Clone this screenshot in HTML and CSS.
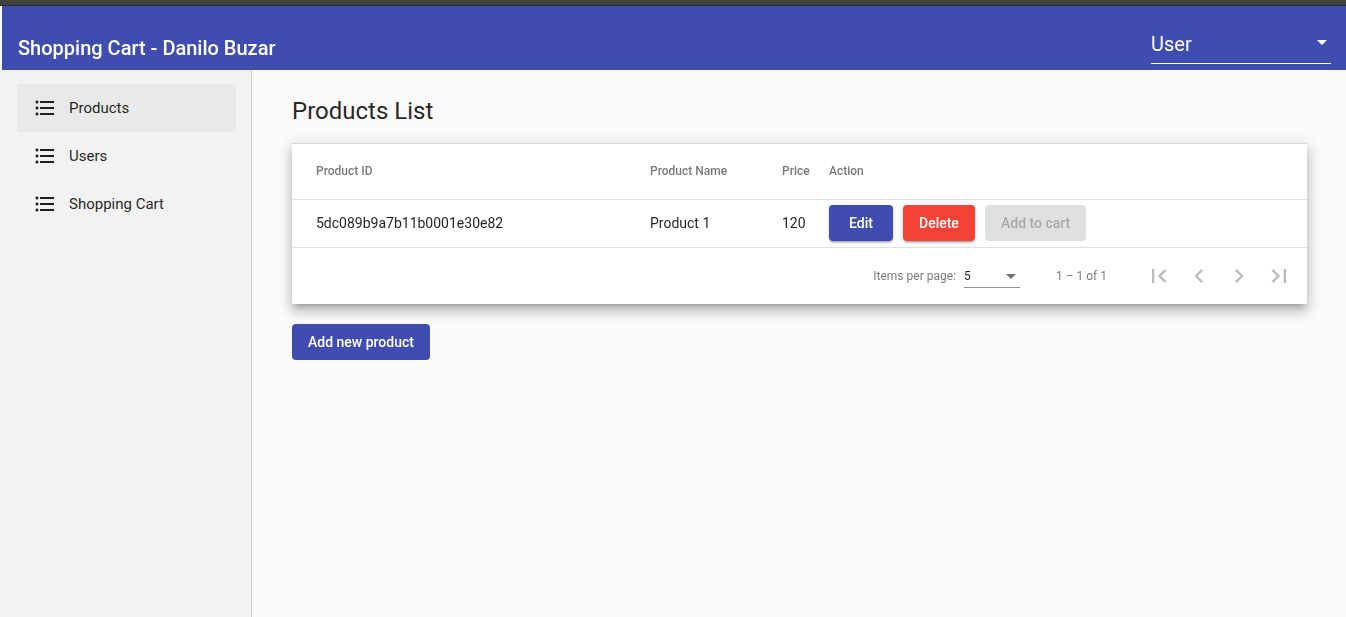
FILE: index.html
```html
<!DOCTYPE html>
<html lang="en">
<head>
<meta charset="utf-8">
<title>Shopping Cart</title>
<link rel="stylesheet" href="styles.css">
</head>
<body>
<div class="strip"></div>
<header class="toolbar">
  <div class="brand">Shopping Cart - Danilo Buzar</div>
  <div class="user-select"><span>User</span><i class="arrow arrow-white"></i></div>
</header>
<div class="shell">
  <nav class="sidebar">
    <a class="nav-item active"><svg class="nav-icon" viewBox="0 0 24 24"><path d="M4 10.5c-.83 0-1.5.67-1.5 1.5s.67 1.5 1.5 1.5 1.5-.67 1.5-1.5-.67-1.5-1.5-1.5zm0-6c-.83 0-1.5.67-1.5 1.5S3.17 7.5 4 7.5 5.5 6.83 5.5 6 4.83 4.500 4 4.500zm0 12c-.83 0-1.5.68-1.5 1.500s.68 1.500 1.500 1.500 1.500-.68 1.500-1.500-.67-1.500-1.500-1.500zM7 19h14v-2H7zm0-6h14v-2H7zm0-8v2h14V5z"/></svg>Products</a>
    <a class="nav-item"><svg class="nav-icon" viewBox="0 0 24 24"><path d="M4 10.5c-.83 0-1.5.67-1.5 1.5s.67 1.5 1.5 1.5 1.5-.67 1.5-1.5-.67-1.5-1.5-1.5zm0-6c-.83 0-1.5.67-1.5 1.5S3.17 7.5 4 7.5 5.5 6.83 5.5 6 4.83 4.500 4 4.500zm0 12c-.83 0-1.5.68-1.5 1.500s.68 1.500 1.500 1.500 1.500-.68 1.500-1.500-.67-1.500-1.500-1.500zM7 19h14v-2H7zm0-6h14v-2H7zm0-8v2h14V5z"/></svg>Users</a>
    <a class="nav-item"><svg class="nav-icon" viewBox="0 0 24 24"><path d="M4 10.5c-.83 0-1.5.67-1.5 1.5s.67 1.5 1.5 1.5 1.5-.67 1.5-1.5-.67-1.5-1.5-1.5zm0-6c-.83 0-1.5.67-1.5 1.5S3.17 7.5 4 7.5 5.5 6.83 5.5 6 4.83 4.500 4 4.500zm0 12c-.83 0-1.5.68-1.5 1.500s.68 1.500 1.500 1.500 1.500-.68 1.500-1.500-.67-1.500-1.500-1.500zM7 19h14v-2H7zm0-6h14v-2H7zm0-8v2h14V5z"/></svg>Shopping Cart</a>
  </nav>
  <main class="content">
    <h1 class="title">Products List</h1>
    <section class="card">
      <div class="row row-head">
        <div class="col-id">Product ID</div>
        <div class="col-name">Product Name</div>
        <div class="col-price">Price</div>
        <div>Action</div>
      </div>
      <div class="row row-body">
        <div class="col-id">5dc089b9a7b11b0001e30e82</div>
        <div class="col-name">Product 1</div>
        <div class="col-price">120</div>
        <div class="actions">
          <button class="btn btn-primary btn-raised">Edit</button>
          <button class="btn btn-warn btn-raised">Delete</button>
          <button class="btn btn-disabled">Add to cart</button>
        </div>
      </div>
      <div class="paginator">
        <span class="page-label">Items per page:</span>
        <div class="page-size"><span>5</span><i class="arrow arrow-grey"></i></div>
        <span class="page-range">1 – 1 of 1</span>
        <div class="page-buttons">
          <svg viewBox="0 0 24 24"><path d="M18.41 16.59L13.82 12l4.59-4.59L17 6l-6 6 6 6zM6 6h2v12H6z"/></svg>
          <svg viewBox="0 0 24 24"><path d="M15.41 7.41L14 6l-6 6 6 6 1.41-1.41L10.83 12z"/></svg>
          <svg viewBox="0 0 24 24"><path d="M10 6L8.59 7.41 13.17 12l-4.58 4.59L10 18l6-6z"/></svg>
          <svg viewBox="0 0 24 24"><path d="M5.59 7.41L10.18 12l-4.59 4.59L7 18l6-6-6-6zM16 6h2v12h-2z"/></svg>
        </div>
      </div>
    </section>
    <button class="btn btn-primary btn-add">Add new product</button>
  </main>
</div>
</body>
</html>
```
FILE: styles.css
```css
* { box-sizing: border-box; }
html, body { height: 100%; }
body {
  margin: 0;
  height: 617px;
  overflow: hidden;
  display: flex;
  flex-direction: column;
  background: #fff;
  font-family: Roboto, "Liberation Sans", sans-serif;
  color: rgba(0, 0, 0, 0.87);
}
.strip {
  height: 6px;
  flex: none;
  background: #424242;
  border-bottom: 1px solid #2f2f2f;
}
.toolbar {
  height: 64px;
  flex: none;
  margin-left: 2px;
  background: #3f4db1;
  color: #fff;
  display: flex;
  justify-content: space-between;
  padding: 0 15px 0 16px;
}
.brand {
  font-size: 20px;
  font-weight: 500;
  line-height: 32px;
  padding-top: 26px;
  will-change: transform;
}
.user-select {
  width: 180px;
  height: 58px;
  border-bottom: 1px solid #fff;
  font-size: 20px;
  display: flex;
  justify-content: space-between;
  align-items: center;
  padding-top: 18px;
  padding-right: 4px;
  will-change: transform;
}
.arrow {
  display: block;
  width: 0;
  height: 0;
  border-left: 5px solid transparent;
  border-right: 5px solid transparent;
  border-top: 5px solid currentColor;
}
.arrow-white { color: #fff; margin-top: -3px; }
.arrow-grey { color: rgba(0, 0, 0, 0.54); margin-top: 1px; }
.shell { flex: 1; display: flex; min-height: 0; }
.sidebar {
  width: 252px;
  flex: none;
  background: #f2f2f2;
  border-right: 1px solid #d4d4d4;
  padding: 14px 15px 0 17px;
}
.nav-item {
  height: 48px;
  display: flex;
  align-items: center;
  padding-left: 16px;
  font-size: 15px;
  color: rgba(0, 0, 0, 0.87);
}
.nav-item.active { background: #e9e9e9; }
.nav-icon {
  width: 24px;
  height: 24px;
  margin-right: 12px;
  fill: #212121;
  flex: none;
}
.content {
  flex: 1;
  background: #fafafa;
  padding: 25px 39px 0 40px;
}
.title {
  margin: 0 0 16px;
  font-size: 24px;
  font-weight: 400;
  line-height: 32px;
}
.card {
  background: #fff;
  border-top: 1px solid #d9d9d9;
  box-shadow: 0 5px 5px -3px rgba(0, 0, 0, 0.2), 0 8px 10px 1px rgba(0, 0, 0, 0.14), 0 3px 14px 2px rgba(0, 0, 0, 0.12);
}
.row {
  display: flex;
  align-items: center;
  padding-left: 24px;
  padding-bottom: 2px;
  border-bottom: 1px solid #e0e0e0;
  will-change: transform;
}
.row-head {
  height: 56px;
  font-size: 12px;
  font-weight: 500;
  color: rgba(0, 0, 0, 0.54);
}
.row-body { height: 48px; font-size: 14px; }
.col-id { width: 334px; }
.col-name { width: 132px; }
.col-price { width: 47px; }
.actions { display: flex; gap: 10px; }
.btn {
  height: 36px;
  min-width: 64px;
  border: 0;
  border-radius: 4px;
  padding: 0 16px;
  font-family: inherit;
  font-size: 14px;
  font-weight: 500;
  color: #fff;
  will-change: transform;
}
.btn-primary { background: #3f4db1; }
.btn-warn { background: #f44336; }
.btn-raised { box-shadow: 0 3px 1px -2px rgba(0, 0, 0, 0.2), 0 2px 2px 0 rgba(0, 0, 0, 0.14), 0 1px 5px 0 rgba(0, 0, 0, 0.12); }
.btn-disabled { background: #e0e0e0; color: rgba(0, 0, 0, 0.26); }
.btn-add { display: block; margin-top: 20px; }
.paginator {
  height: 56px;
  display: flex;
  align-items: center;
  justify-content: flex-end;
  padding-right: 14px;
  font-size: 12px;
  color: rgba(0, 0, 0, 0.54);
  will-change: transform;
}
.page-label { margin-right: 8px; }
.page-size {
  width: 56px;
  height: 24px;
  border-bottom: 1px solid rgba(0, 0, 0, 0.42);
  display: flex;
  justify-content: space-between;
  align-items: center;
  padding-right: 4px;
  color: rgba(0, 0, 0, 0.87);
}
.page-range { margin: 0 38px 0 36px; }
.page-buttons { display: flex; gap: 12px; }
.page-buttons svg { width: 28px; height: 28px; fill: rgba(0, 0, 0, 0.26); }
```
